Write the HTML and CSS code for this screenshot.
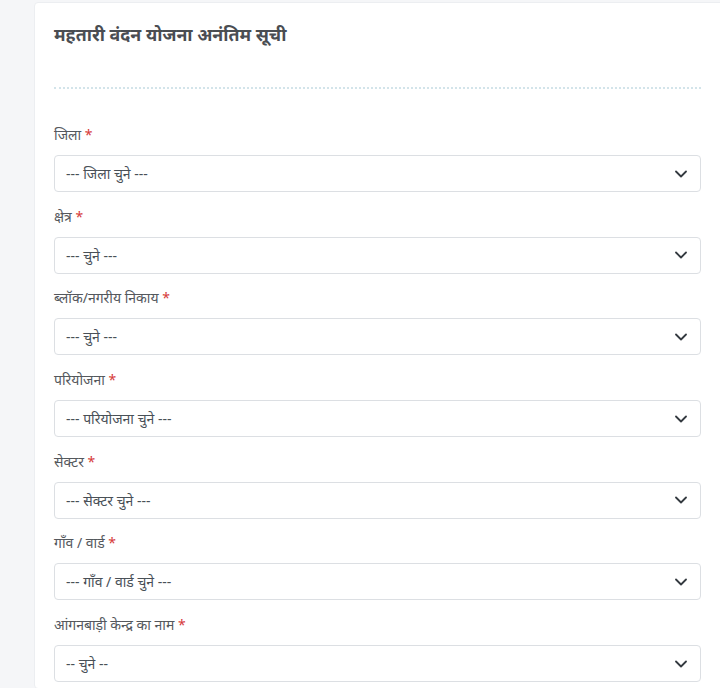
FILE: index.html
```html
<!DOCTYPE html>
<html lang="hi">
<head>
<meta charset="utf-8">
<title>महतारी वंदन योजना अनंतिम सूची</title>
<link rel="stylesheet" href="styles.css">
</head>
<body>
<div class="page">
  <div class="card">
    <div class="card-header">
      <h1 class="title">महतारी वंदन योजना अनंतिम सूची</h1>
    </div>
    <form class="form">
      <div class="group">
        <label class="label">जिला <span class="req">*</span></label>
        <div class="select"><span>--- जिला चुने ---</span><svg class="chev" viewBox="0 0 12 8" width="12" height="8"><path d="M1 1.5 L6 6.5 L11 1.5" fill="none" stroke="#343a40" stroke-width="1.8" stroke-linecap="round" stroke-linejoin="round"/></svg></div>
      </div>
      <div class="group">
        <label class="label">क्षेत्र <span class="req">*</span></label>
        <div class="select"><span>--- चुने ---</span><svg class="chev" viewBox="0 0 12 8" width="12" height="8"><path d="M1 1.5 L6 6.5 L11 1.5" fill="none" stroke="#343a40" stroke-width="1.8" stroke-linecap="round" stroke-linejoin="round"/></svg></div>
      </div>
      <div class="group">
        <label class="label">ब्लॉक/नगरीय निकाय <span class="req">*</span></label>
        <div class="select"><span>--- चुने ---</span><svg class="chev" viewBox="0 0 12 8" width="12" height="8"><path d="M1 1.5 L6 6.5 L11 1.5" fill="none" stroke="#343a40" stroke-width="1.8" stroke-linecap="round" stroke-linejoin="round"/></svg></div>
      </div>
      <div class="group">
        <label class="label">परियोजना <span class="req">*</span></label>
        <div class="select"><span>--- परियोजना चुने ---</span><svg class="chev" viewBox="0 0 12 8" width="12" height="8"><path d="M1 1.5 L6 6.5 L11 1.5" fill="none" stroke="#343a40" stroke-width="1.8" stroke-linecap="round" stroke-linejoin="round"/></svg></div>
      </div>
      <div class="group">
        <label class="label">सेक्टर <span class="req">*</span></label>
        <div class="select"><span>--- सेक्टर चुने ---</span><svg class="chev" viewBox="0 0 12 8" width="12" height="8"><path d="M1 1.5 L6 6.5 L11 1.5" fill="none" stroke="#343a40" stroke-width="1.8" stroke-linecap="round" stroke-linejoin="round"/></svg></div>
      </div>
      <div class="group">
        <label class="label">गाँव / वार्ड <span class="req">*</span></label>
        <div class="select"><span>--- गाँव / वार्ड चुने ---</span><svg class="chev" viewBox="0 0 12 8" width="12" height="8"><path d="M1 1.5 L6 6.5 L11 1.5" fill="none" stroke="#343a40" stroke-width="1.8" stroke-linecap="round" stroke-linejoin="round"/></svg></div>
      </div>
      <div class="group">
        <label class="label">आंगनबाड़ी केन्द्र का नाम <span class="req">*</span></label>
        <div class="select"><span>-- चुने --</span><svg class="chev" viewBox="0 0 12 8" width="12" height="8"><path d="M1 1.5 L6 6.5 L11 1.5" fill="none" stroke="#343a40" stroke-width="1.8" stroke-linecap="round" stroke-linejoin="round"/></svg></div>
      </div>
    </form>
  </div>
</div>
</body>
</html>
```

FILE: styles.css
```css
html, body {
  margin: 0;
  padding: 0;
  background: #f5f6f8;
  overflow: hidden;
  height: 688px;
}
body {
  font-family: "Noto Sans", "Noto Sans Devanagari", "Lohit Devanagari", sans-serif;
  color: #495057;
}
.page {
  padding: 2px 0 0 34px;
}
.card {
  background: #ffffff;
  border: 1px solid #eceef1;
  border-radius: 4px;
  margin-right: -30px;
  padding: 19px 48px 6px 19px;
}
.card-header {
  padding-bottom: 41px;
  border-bottom: 2px dotted #d3e4ea;
}
.title {
  margin: 0;
  font-size: 17.8px;
  line-height: 24px;
  font-weight: 700;
  color: #4a4d52;
}
.form {
  padding-top: 36px;
  display: flex;
  flex-direction: column;
  gap: 14.7px;
}
.group {
  display: flex;
  flex-direction: column;
  gap: 10px;
}
.label {
  font-size: 14px;
  line-height: 20px;
  color: #54585d;
}
.req {
  color: #d63a3a;
}
.select {
  height: 37px;
  box-sizing: border-box;
  border: 1px solid #dcdfe3;
  border-radius: 4px;
  display: flex;
  align-items: center;
  justify-content: space-between;
  padding: 0 13px 0 11px;
  font-size: 14px;
  color: #495057;
}
.chev {
  display: block;
}
```
